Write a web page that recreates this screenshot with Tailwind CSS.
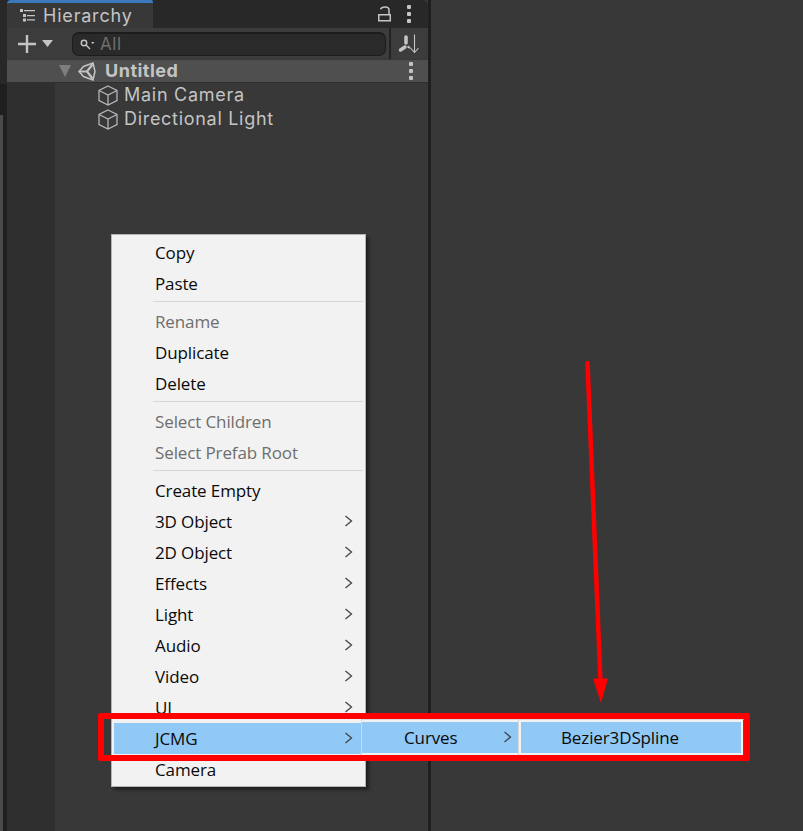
<!DOCTYPE html>
<html>
<head>
<meta charset="utf-8">
<script src="https://cdn.jsdelivr.net/npm/@tailwindcss/browser@4"></script>
</head>
<body class="bg-[#383838]">
<div class="relative w-[803px] h-[831px] overflow-hidden bg-[#383838] flex font-['Inter',sans-serif]">
  <div class="w-[7px] h-full bg-[#1f1f1f] flex flex-col shrink-0">
    <div class="h-[84px] bg-[#282828] shrink-0"></div>
    <div class="h-[31px] bg-[#1f1f1f] shrink-0"></div>
    <div class="w-[3px] flex-1 bg-[#4a4a4a]"></div>
  </div>
  <div class="w-[421px] h-full flex flex-col shrink-0">
    <div class="h-[28px] bg-[#282828] flex items-center rounded-tr-[6px] shrink-0">
      <div class="w-[146px] h-full bg-[#383838] border-t-[3px] border-[#3a79bb] flex items-center pl-[13px] gap-[8px] rounded-tl-[4px] rounded-tr-[2px]">
        <svg width="15" height="13" viewBox="0 0 15 13" fill="#c4c4c4" class="shrink-0"><path d="M0 0h3v3H0zM3 5h3v3H3zM3 9.500h3v3H3z"/><path d="M4 1h11v1.300H4zM7 6h8v1.300H7zM7 10.300h8v1.300H7z"/></svg>
        <span class="text-[18px] leading-none tracking-[0.8px] text-[#c4c4c4]">Hierarchy</span>
      </div>
      <div class="flex-1 flex justify-end items-center gap-[16px] pr-[17px]">
        <svg width="13" height="16" viewBox="0 0 13 16" fill="none" stroke="#c4c4c4" stroke-width="1.500"><path d="M2.500 3.200Q3.500 1 7 1Q11 1 11 4V8.500" /><rect x="0.750" y="8.750" width="11.500" height="6" /></svg>
        <div class="flex flex-col gap-[3px]"><span class="block w-[4px] h-[4px] bg-[#c4c4c4] rounded-[1px]"></span><span class="block w-[4px] h-[4px] bg-[#c4c4c4] rounded-[1px]"></span><span class="block w-[4px] h-[4px] bg-[#c4c4c4] rounded-[1px]"></span></div>
      </div>
    </div>
    <div class="h-[31px] bg-[#3c3c3c] flex items-center shrink-0 pl-[11px]">
      <svg width="18" height="18" viewBox="0 0 18 18" stroke="#c4c4c4" stroke-width="2.400" class="shrink-0"><path d="M0 9h18M9 0v18"/></svg>
      <svg width="11" height="7" viewBox="0 0 11 7" fill="#c4c4c4" class="ml-[6px] shrink-0"><path d="M0 0h11L5.500 7z"/></svg>
      <div class="ml-[19px] w-[314px] h-[24px] rounded-[7px] bg-[#2a2a2a] border border-[#1c1c1c] border-t-2 flex items-center pl-[7px] shrink-0">
        <svg width="15" height="11" viewBox="0 0 15 11" fill="none" stroke="#c4c4c4" stroke-width="1.500" class="shrink-0"><circle cx="4" cy="4" r="2.700"/><path d="M6 6l4 4"/><path d="M11 3h3.500L12.700 5z" fill="#c4c4c4" stroke="none"/></svg>
        <span class="ml-[5px] text-[17px] leading-none tracking-[0.6px] text-[#6f6f6f]">All</span>
      </div>
      <div class="ml-[3px] w-[2px] h-full bg-[#232323] shrink-0"></div>
      <svg width="22" height="20" viewBox="0 0 22 20" class="ml-[7px] shrink-0" fill="none" stroke="#c4c4c4"><path d="M8 3v6" stroke-width="3.600" stroke-linecap="round"/><path d="M2.500 16l4.500 -3" stroke-width="3.400" stroke-linecap="round"/><path d="M9.500 12.300l2.500 1.700" stroke-width="2"/><path d="M16.500 0.500v17.500M12.500 14l4 4.500 4 -4.500" stroke-width="1.100"/></svg>
    </div>
    <div class="mt-[1px] h-[23px] bg-[#4f4f4f] border-b border-[#2f2f2f] flex items-center shrink-0 pl-[52px] pr-[15px]">
      <svg width="12" height="12" viewBox="0 0 12 12" fill="#7e7e7e" class="shrink-0"><path d="M0 0h12L6 12z"/></svg>
      <svg width="18" height="19" viewBox="0 0 18 19" fill="none" stroke="#c4c4c4" class="ml-[7px] shrink-0"><path d="M1 9.500L5.500 4.500 15 1 17 9.500 15 18 5.500 14.500z" stroke-width="1.500"/><path d="M2 9.500H9L14.500 2.500M9 9.500L14.500 16.500" stroke-width="2.200"/></svg>
      <span class="ml-[9px] text-[18px] leading-none font-bold tracking-[0.5px] text-[#c4c4c4]">Untitled</span>
      <div class="ml-auto flex flex-col gap-[3px]"><span class="block w-[4px] h-[4px] bg-[#c4c4c4] rounded-[1px]"></span><span class="block w-[4px] h-[4px] bg-[#c4c4c4] rounded-[1px]"></span><span class="block w-[4px] h-[4px] bg-[#c4c4c4] rounded-[1px]"></span></div>
    </div>
    <div class="flex-1 flex">
      <div class="w-[48px] bg-[#2f2f2f] shrink-0"></div>
      <div class="flex-1 pl-[43px]">
        <div class="h-[24px] flex items-center gap-[6px]">
          <svg width="20" height="21" viewBox="0 0 20 21" fill="none" stroke="#b4b4b4" stroke-width="1.300" class="shrink-0"><path d="M10 1L19 5.500V15.500L10 20 1 15.500V5.500zM1 5.500L10 10 19 5.500M10 10V20"/></svg>
          <span class="text-[18px] leading-none tracking-[0.72px] text-[#c4c4c4]">Main Camera</span>
        </div>
        <div class="h-[24px] flex items-center gap-[6px]">
          <svg width="20" height="21" viewBox="0 0 20 21" fill="none" stroke="#b4b4b4" stroke-width="1.300" class="shrink-0"><path d="M10 1L19 5.500V15.500L10 20 1 15.500V5.500zM1 5.500L10 10 19 5.500M10 10V20"/></svg>
          <span class="text-[18px] leading-none tracking-[0.7px] text-[#c4c4c4]">Directional Light</span>
        </div>
      </div>
    </div>
  </div>
  <div class="w-[3px] h-full bg-[#1f1f1f] shrink-0"></div>
  <div class="flex-1"></div>

  <!-- context menu -->
  <div class="absolute left-[111px] top-[234px] w-[255px] h-[553px] bg-[#f2f2f2] border border-[#b5b5b5] shadow-[3px_3px_3px_rgba(0,0,0,0.45)] pt-[2px] px-[2px] font-['Open_Sans',sans-serif] text-[17px] tracking-[-0.12px] text-[#0a0a0a]">
    <div class="h-[31px] flex items-center pl-[41px]">Copy</div>
    <div class="h-[31px] flex items-center pl-[41px]">Paste</div>
    <div class="ml-[39px] mt-[2px] mb-[4px] border-t border-[#d6d6d6]"></div>
    <div class="h-[31px] flex items-center pl-[41px] text-[#6e6e6e]">Rename</div>
    <div class="h-[31px] flex items-center pl-[41px]">Duplicate</div>
    <div class="h-[31px] flex items-center pl-[41px]">Delete</div>
    <div class="ml-[39px] mt-[2px] mb-[4px] border-t border-[#d6d6d6]"></div>
    <div class="h-[31px] flex items-center pl-[41px] text-[#6e6e6e]">Select Children</div>
    <div class="h-[31px] flex items-center pl-[41px] text-[#6e6e6e]">Select Prefab Root</div>
    <div class="ml-[39px] mt-[2px] mb-[4px] border-t border-[#d6d6d6]"></div>
    <div class="h-[31px] flex items-center pl-[41px]">Create Empty</div>
    <div class="h-[31px] flex items-center justify-between pl-[41px] pr-[10px]">3D Object<svg width="9" height="12" viewBox="0 0 9 12" fill="none" stroke="#444" stroke-width="1.300" class="mb-[2px]"><path d="M1.500 1l6 5-6 5"/></svg></div>
    <div class="h-[31px] flex items-center justify-between pl-[41px] pr-[10px]">2D Object<svg width="9" height="12" viewBox="0 0 9 12" fill="none" stroke="#444" stroke-width="1.300" class="mb-[2px]"><path d="M1.500 1l6 5-6 5"/></svg></div>
    <div class="h-[31px] flex items-center justify-between pl-[41px] pr-[10px]">Effects<svg width="9" height="12" viewBox="0 0 9 12" fill="none" stroke="#444" stroke-width="1.300" class="mb-[2px]"><path d="M1.500 1l6 5-6 5"/></svg></div>
    <div class="h-[31px] flex items-center justify-between pl-[41px] pr-[10px]">Light<svg width="9" height="12" viewBox="0 0 9 12" fill="none" stroke="#444" stroke-width="1.300" class="mb-[2px]"><path d="M1.500 1l6 5-6 5"/></svg></div>
    <div class="h-[31px] flex items-center justify-between pl-[41px] pr-[10px]">Audio<svg width="9" height="12" viewBox="0 0 9 12" fill="none" stroke="#444" stroke-width="1.300" class="mb-[2px]"><path d="M1.500 1l6 5-6 5"/></svg></div>
    <div class="h-[31px] flex items-center justify-between pl-[41px] pr-[10px]">Video<svg width="9" height="12" viewBox="0 0 9 12" fill="none" stroke="#444" stroke-width="1.300" class="mb-[2px]"><path d="M1.500 1l6 5-6 5"/></svg></div>
    <div class="h-[31px] flex items-center justify-between pl-[41px] pr-[10px]">UI<svg width="9" height="12" viewBox="0 0 9 12" fill="none" stroke="#444" stroke-width="1.300" class="mb-[2px]"><path d="M1.500 1l6 5-6 5"/></svg></div>
    <div class="h-[31px] flex items-center justify-between pl-[41px] pr-[10px] bg-[#90c8f6]">JCMG<svg width="9" height="12" viewBox="0 0 9 12" fill="none" stroke="#444" stroke-width="1.300" class="mb-[2px]"><path d="M1.500 1l6 5-6 5"/></svg></div>
    <div class="h-[31px] flex items-center pl-[41px]">Camera</div>
  </div>

  <!-- submenus -->
  <div class="absolute left-[361px] top-[719px] w-[158px] h-[37px] bg-[#f2f2f2] border border-[#d8d8d8] py-[2px] px-0 font-['Open_Sans',sans-serif] text-[17px] tracking-[-0.12px] text-[#0a0a0a]">
    <div class="h-[31px] bg-[#90c8f6] flex items-center justify-between pl-[42px] pr-[6px]">Curves<svg width="9" height="12" viewBox="0 0 9 12" fill="none" stroke="#444" stroke-width="1.300" class="mb-[2px]"><path d="M1.500 1l6 5-6 5"/></svg></div>
  </div>
  <div class="absolute left-[518px] top-[719px] w-[226px] h-[37px] bg-[#f2f2f2] border border-[#d8d8d8] border-r-[#555] py-[2px] px-[2px] font-['Open_Sans',sans-serif] text-[17px] tracking-[-0.12px] text-[#0a0a0a]">
    <div class="h-[31px] bg-[#90c8f6] flex items-center pl-[40px]">Bezier3DSpline</div>
  </div>

  <!-- annotations -->
  <div class="absolute left-[98px] top-[713px] w-[652px] h-[48px] border-[6px] border-[#ff0000] rounded-[2px]"></div>
  <svg class="absolute left-0 top-0" width="803" height="831" viewBox="0 0 803 831" fill="none">
    <path d="M587.500 363L600.500 682" stroke="#ff0000" stroke-width="4.500" stroke-linecap="round"/>
    <path d="M593 678.500H608L601 703z" fill="#ff0000"/>
  </svg>
</div>
</body>
</html>
